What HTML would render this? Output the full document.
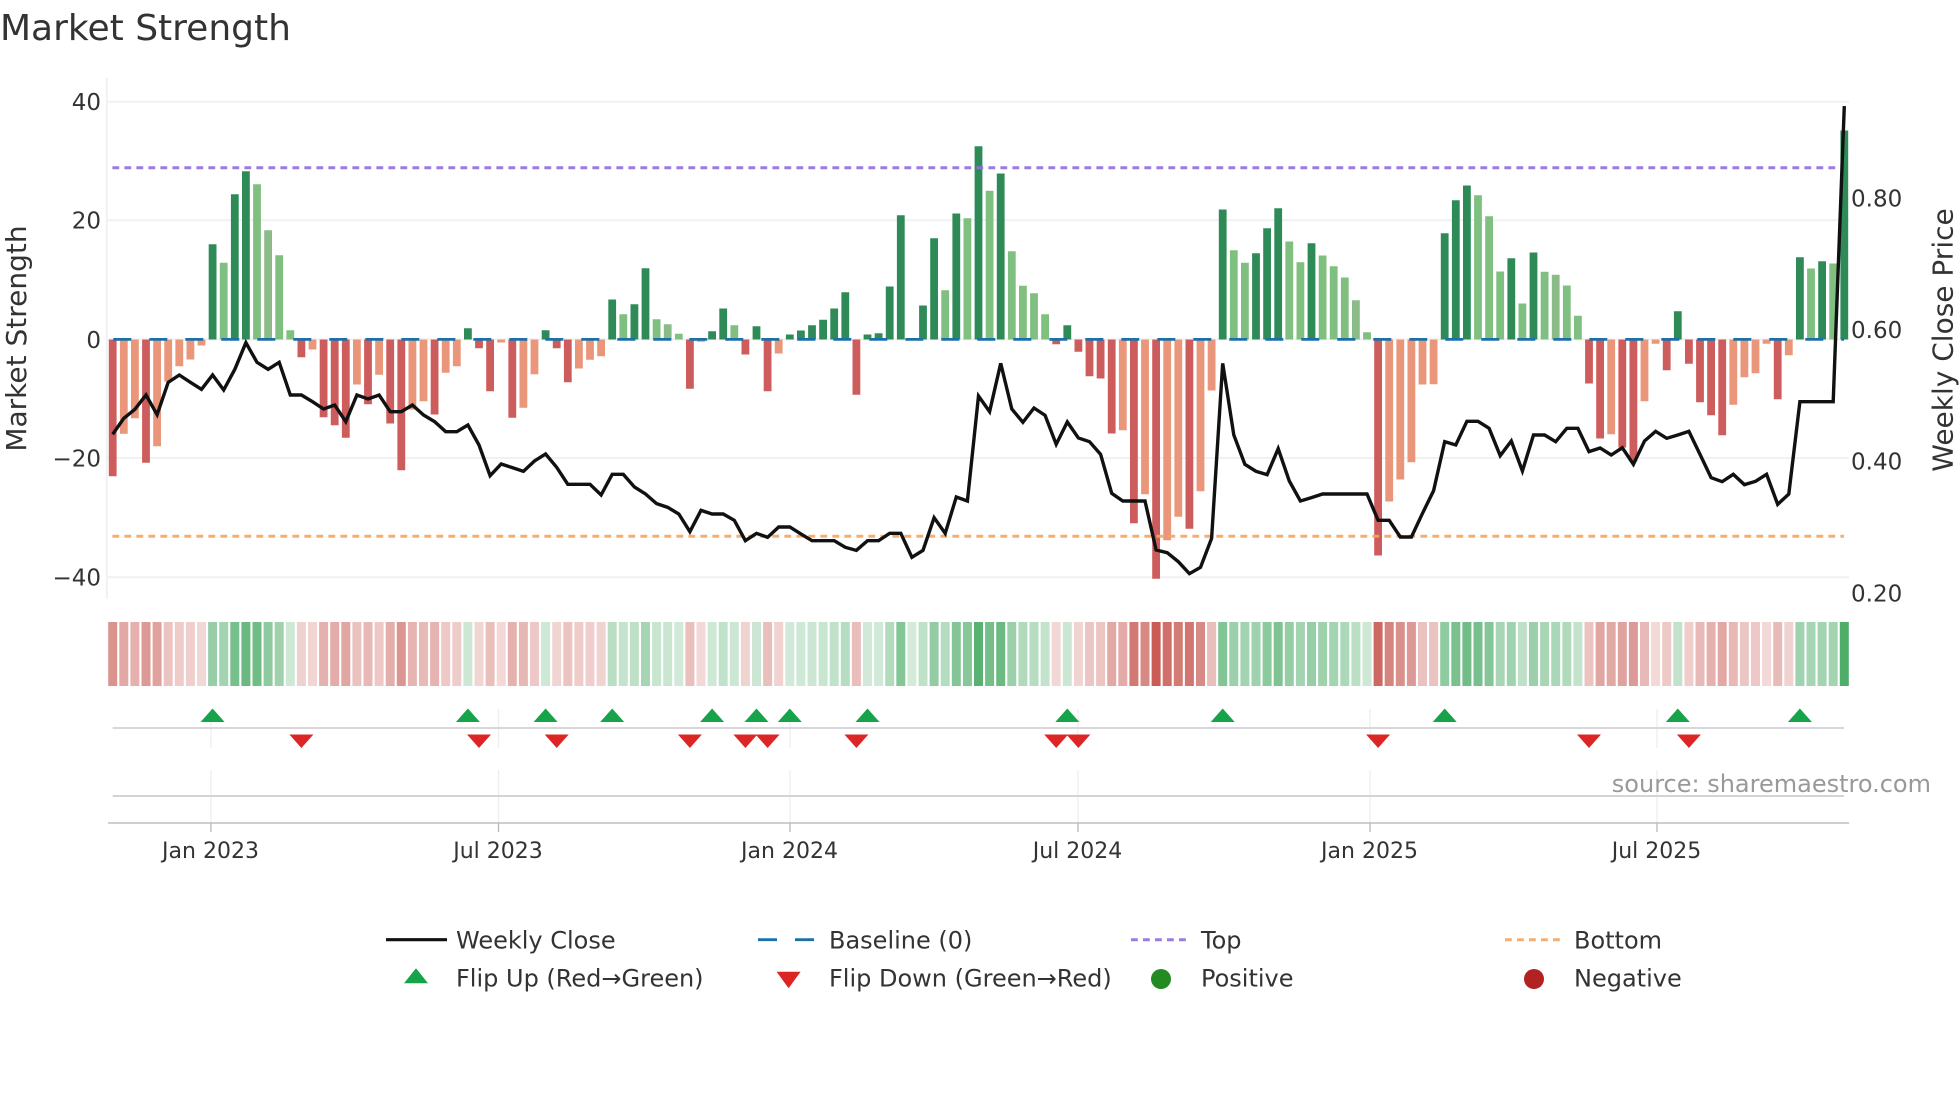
<!DOCTYPE html>
<html lang="en"><head><meta charset="utf-8"><title>Market Strength</title>
<style>
html,body{margin:0;padding:0;background:#fff}
svg{display:block}
text{font-family:"DejaVu Sans","Liberation Sans",sans-serif;fill:#333}
.n{vector-effect:non-scaling-stroke}
.s path{vector-effect:non-scaling-stroke}
</style></head><body>
<svg width="1960" height="1102" viewBox="0 0 1960 1102" xmlns="http://www.w3.org/2000/svg">
<rect width="1960" height="1102" fill="#fff"/>
<text x="0" y="40" font-size="36">Market Strength</text>

<!-- grid -->
<g stroke="#f1f1f3" stroke-width="2" fill="none">
<path d="M106.8 78V599"/>
<path d="M107 101.7H1849M107 220.3H1849M107 339.4H1849M107 458H1849M107 577.3H1849"/>
</g>

<!-- bars -->
<g class="s" transform="translate(112.7,339.5) scale(11.1,1)" fill="none" stroke-width="7.8">
<path stroke="#2e8b57" d="M9 0V-95.3M11 0V-145.3M12 0V-168.3M32 0V-11.3M39 0V-9.3M45 0V-40M47 0V-35.3M48 0V-71.3M54 0V-8.3M55 0V-31M58 0V-13.3M61 0V-5M62 0V-9M63 0V-14.3M64 0V-19.7M65 0V-31M66 0V-47.3M68 0V-5M69 0V-6.3M70 0V-53M71 0V-124.3M73 0V-34M74 0V-101.3M76 0V-126M78 0V-193.3M80 0V-166M86 0V-14.3M100 0V-130M103 0V-86.3M104 0V-111.3M105 0V-131.3M108 0V-96.3M120 0V-106.3M121 0V-139.3M122 0V-154M126 0V-81.3M128 0V-87M141 0V-28.3M152 0V-82.3M154 0V-78.3M156 0V-209"/>
<path stroke="#7fbf7f" d="M10 0V-76.7M13 0V-155.3M15 0V-84.3M16 0V-9.3M46 0V-25.3M49 0V-20.3M51 0V-5.7M56 0V-14.3M75 0V-49.3M77 0V-121.3M79 0V-148.7M81 0V-88.3M82 0V-53.7M83 0V-46.3M84 0V-25.3M101 0V-89.3M102 0V-76.7M106 0V-98M107 0V-77.3M109 0V-84M110 0V-73.3M111 0V-62M113 0V-7.3M123 0V-144.3M124 0V-123.3M125 0V-68M127 0V-36M129 0V-67.7M131 0V-54M132 0V-23.7M153 0V-71M155 0V-76"/>
<path stroke="#8bbb89" d="M14 0V-109.3M50 0V-15.3M112 0V-39.3M130 0V-64.7"/>
<path stroke="#cd5c5c" d="M0 0V136.7M3 0V123.3M17 0V17.7M19 0V77.7M20 0V85.7M21 0V98.3M23 0V64.7M25 0V84M26 0V130.7M29 0V75M33 0V8.7M34 0V51.7M36 0V78.3M40 0V8.7M41 0V42.7M52 0V49.3M57 0V15M59 0V51.7M67 0V55.3M85 0V4.7M87 0V12.3M88 0V36.7M89 0V39M90 0V94M92 0V183.7M94 0V239.3M97 0V189.3M114 0V216M133 0V44M134 0V99M136 0V108M137 0V121.7M140 0V30.7M142 0V24.3M143 0V62.7M144 0V75.7M145 0V95.7M150 0V59.7"/>
<path stroke="#e9967a" d="M1 0V94.3M2 0V78.7M4 0V106.7M5 0V42M6 0V26.7M7 0V20M8 0V6M18 0V10M22 0V45M24 0V35.3M27 0V70M28 0V61.7M30 0V33.3M31 0V26.7M35 0V3M37 0V68.3M38 0V34.7M42 0V29M43 0V20.3M44 0V16.7M53 0V2.3M60 0V14M91 0V90.7M93 0V154.7M95 0V200.7M96 0V177.3M98 0V151.7M99 0V51M115 0V162M116 0V140M117 0V122.7M118 0V45M119 0V44.7M135 0V94.7M138 0V61.7M139 0V4.3M146 0V65.3M147 0V37.7M148 0V33.7M149 0V4.3M151 0V15.7"/>
</g>

<!-- reference lines -->
<g fill="none">
<path d="M113.3 339.4H1844" stroke="#1c70a8" stroke-width="2.8" stroke-dasharray="18 18"/>
<path d="M112.4 167.7H1836" stroke="#9370db" stroke-opacity=".92" stroke-width="3" stroke-dasharray="6.8 5.2"/>
<path d="M112.4 536.3H1844" stroke="#f4a460" stroke-opacity=".9" stroke-width="3" stroke-dasharray="6.8 5.2"/>
</g>

<!-- weekly close -->
<polyline class="n" transform="translate(112.7,330) scale(11.1,0.33333)" fill="none" stroke="#111" stroke-width="3.4" stroke-linejoin="miter" points="0,313 1,265 2,238 3,195 4,254 5,157 6,135 7,157 8,178 9,135 10,180 11,118 12,38 13,97 14,118 15,97 16,195 17,195 18,215 19,237 20,225 21,275 22,195 23,207 24,195 25,245 26,245 27,225 28,255 29,275 30,305 31,305 32,285 33,345 34,437 35,402 36,413 37,424 38,393 39,372 40,412 41,463 42,463 43,463 44,495 45,433 46,433 47,471 48,492 49,521 50,532 51,552 52,605 53,541 54,552 55,552 56,571 57,632 58,610 59,622 60,591 61,591 62,612 63,632 64,632 65,632 66,652 67,661 68,632 69,632 70,610 71,610 72,682 73,661 74,563 75,610 76,501 77,513 78,198 79,245 80,100 81,237 82,277 83,234 84,256 85,343 86,276 87,324 88,335 89,373 90,490 91,513 92,513 93,513 94,660 95,668 96,695 97,731 98,712 99,625 100,100 101,315 102,403 103,424 104,434 105,356 106,453 107,513 108,503 109,492 110,492 111,492 112,492 113,492 114,571 115,571 116,621 117,621 118,550 119,482 120,335 121,345 122,274 123,274 124,295 125,377 126,333 127,423 128,315 129,315 130,335 131,295 132,295 133,365 134,354 135,375 136,353 137,403 138,333 139,304 140,325 141,315 142,304 143,373 144,443 145,455 146,433 147,464 148,454 149,433 150,523 151,492 152,215 153,215 154,215 155,215 156,-672"/>

<!-- heat strip -->
<g class="s" transform="translate(112.7,622) scale(11.1,1)" fill="none" stroke-width="9">
<g stroke="#c95c55">
<path d="M0 0v64" opacity=".66"/><path d="M1 0v64" opacity=".53"/><path d="M2 0v64" opacity=".48"/><path d="M3 0v64" opacity=".62"/><path d="M4 0v64" opacity=".57"/><path d="M5 0v64" opacity=".36"/><path d="M6 0v64" opacity=".31"/><path d="M7 0v64" opacity=".29"/><path d="M8 0v64" opacity=".24"/><path d="M17 0v64" opacity=".28"/><path d="M18 0v64" opacity=".25"/><path d="M19 0v64" opacity=".47"/><path d="M20 0v64" opacity=".5"/><path d="M21 0v64" opacity=".54"/><path d="M22 0v64" opacity=".37"/><path d="M23 0v64" opacity=".43"/><path d="M24 0v64" opacity=".33"/><path d="M25 0v64" opacity=".49"/><path d="M26 0v64" opacity=".64"/><path d="M27 0v64" opacity=".45"/><path d="M28 0v64" opacity=".42"/><path d="M29 0v64" opacity=".46"/><path d="M30 0v64" opacity=".33"/><path d="M31 0v64" opacity=".31"/><path d="M33 0v64" opacity=".25"/><path d="M34 0v64" opacity=".39"/><path d="M35 0v64" opacity=".23"/><path d="M36 0v64" opacity=".47"/><path d="M37 0v64" opacity=".44"/><path d="M38 0v64" opacity=".33"/><path d="M40 0v64" opacity=".25"/><path d="M41 0v64" opacity=".36"/><path d="M42 0v64" opacity=".31"/><path d="M43 0v64" opacity=".29"/><path d="M44 0v64" opacity=".27"/><path d="M52 0v64" opacity=".38"/><path d="M53 0v64" opacity=".23"/><path d="M57 0v64" opacity=".27"/><path d="M59 0v64" opacity=".39"/><path d="M60 0v64" opacity=".27"/><path d="M67 0v64" opacity=".4"/><path d="M85 0v64" opacity=".24"/><path d="M87 0v64" opacity=".26"/><path d="M88 0v64" opacity=".34"/><path d="M89 0v64" opacity=".35"/><path d="M90 0v64" opacity=".53"/><path d="M91 0v64" opacity=".51"/><path d="M92 0v64" opacity=".82"/><path d="M93 0v64" opacity=".72"/><path d="M94 0v64"/><path d="M95 0v64" opacity=".87"/><path d="M96 0v64" opacity=".8"/><path d="M97 0v64" opacity=".84"/><path d="M98 0v64" opacity=".71"/><path d="M99 0v64" opacity=".39"/><path d="M114 0v64" opacity=".92"/><path d="M115 0v64" opacity=".75"/><path d="M116 0v64" opacity=".68"/><path d="M117 0v64" opacity=".62"/><path d="M118 0v64" opacity=".37"/><path d="M119 0v64" opacity=".37"/><path d="M133 0v64" opacity=".36"/><path d="M134 0v64" opacity=".54"/><path d="M135 0v64" opacity=".53"/><path d="M136 0v64" opacity=".57"/><path d="M137 0v64" opacity=".62"/><path d="M138 0v64" opacity=".42"/><path d="M139 0v64" opacity=".23"/><path d="M140 0v64" opacity=".32"/><path d="M142 0v64" opacity=".3"/><path d="M143 0v64" opacity=".42"/><path d="M144 0v64" opacity=".47"/><path d="M145 0v64" opacity=".53"/><path d="M146 0v64" opacity=".43"/><path d="M147 0v64" opacity=".34"/><path d="M148 0v64" opacity=".33"/><path d="M149 0v64" opacity=".23"/><path d="M150 0v64" opacity=".41"/><path d="M151 0v64" opacity=".27"/>
</g>
<g stroke="#4fad6a">
<path d="M9 0v64" opacity=".59"/><path d="M10 0v64" opacity=".52"/><path d="M11 0v64" opacity=".77"/><path d="M12 0v64" opacity=".85"/><path d="M13 0v64" opacity=".81"/><path d="M14 0v64" opacity=".64"/><path d="M15 0v64" opacity=".55"/><path d="M16 0v64" opacity=".27"/><path d="M32 0v64" opacity=".28"/><path d="M39 0v64" opacity=".27"/><path d="M45 0v64" opacity=".39"/><path d="M46 0v64" opacity=".33"/><path d="M47 0v64" opacity=".37"/><path d="M48 0v64" opacity=".5"/><path d="M49 0v64" opacity=".31"/><path d="M50 0v64" opacity=".3"/><path d="M51 0v64" opacity=".26"/><path d="M54 0v64" opacity=".27"/><path d="M55 0v64" opacity=".35"/><path d="M56 0v64" opacity=".29"/><path d="M58 0v64" opacity=".29"/><path d="M61 0v64" opacity=".26"/><path d="M62 0v64" opacity=".27"/><path d="M63 0v64" opacity=".29"/><path d="M64 0v64" opacity=".31"/><path d="M65 0v64" opacity=".35"/><path d="M66 0v64" opacity=".41"/><path d="M68 0v64" opacity=".26"/><path d="M69 0v64" opacity=".26"/><path d="M70 0v64" opacity=".43"/><path d="M71 0v64" opacity=".69"/><path d="M72 0v64" opacity=".24"/><path d="M73 0v64" opacity=".36"/><path d="M74 0v64" opacity=".61"/><path d="M75 0v64" opacity=".42"/><path d="M76 0v64" opacity=".7"/><path d="M77 0v64" opacity=".68"/><path d="M78 0v64" opacity=".94"/><path d="M79 0v64" opacity=".78"/><path d="M80 0v64" opacity=".84"/><path d="M81 0v64" opacity=".56"/><path d="M82 0v64" opacity=".44"/><path d="M83 0v64" opacity=".41"/><path d="M84 0v64" opacity=".33"/><path d="M86 0v64" opacity=".29"/><path d="M100 0v64" opacity=".71"/><path d="M101 0v64" opacity=".56"/><path d="M102 0v64" opacity=".52"/><path d="M103 0v64" opacity=".55"/><path d="M104 0v64" opacity=".65"/><path d="M105 0v64" opacity=".72"/><path d="M106 0v64" opacity=".6"/><path d="M107 0v64" opacity=".52"/><path d="M108 0v64" opacity=".59"/><path d="M109 0v64" opacity=".55"/><path d="M110 0v64" opacity=".51"/><path d="M111 0v64" opacity=".47"/><path d="M112 0v64" opacity=".38"/><path d="M113 0v64" opacity=".27"/><path d="M120 0v64" opacity=".63"/><path d="M121 0v64" opacity=".75"/><path d="M122 0v64" opacity=".8"/><path d="M123 0v64" opacity=".77"/><path d="M124 0v64" opacity=".69"/><path d="M125 0v64" opacity=".49"/><path d="M126 0v64" opacity=".54"/><path d="M127 0v64" opacity=".37"/><path d="M128 0v64" opacity=".56"/><path d="M129 0v64" opacity=".49"/><path d="M130 0v64" opacity=".48"/><path d="M131 0v64" opacity=".44"/><path d="M132 0v64" opacity=".33"/><path d="M141 0v64" opacity=".34"/><path d="M152 0v64" opacity=".54"/><path d="M153 0v64" opacity=".5"/><path d="M154 0v64" opacity=".52"/><path d="M155 0v64" opacity=".52"/><path d="M156 0v64"/>
</g>
</g>

<!-- lower panel -->
<g fill="none">
<path stroke="#eceef2" stroke-width="1.3" d="M210.9 709V748M210.9 770V823M498.5 709V748M498.5 770V823M790 709V748M790 770V823M1078 709V748M1078 770V823M1370 709V748M1370 770V823M1657 709V748M1657 770V823"/>
<path stroke="#d6d6db" stroke-width="2" d="M112.7 728H1844"/>
<path stroke="#d4d4d4" stroke-width="2" d="M112.7 796H1844"/>
<path stroke="#cfcfcf" stroke-width="2" d="M108 823H1849"/>
<path stroke="#b8b8b8" stroke-width="1.3" d="M210.9 823V832M498.5 823V832M790 823V832M1078 823V832M1370 823V832M1657 823V832"/>
</g>
<path fill="#16a34a" d="M212.6 708.5l12 13.5h-24zM467.9 708.5l12 13.5h-24zM545.6 708.5l12 13.5h-24zM612.2 708.5l12 13.5h-24zM712.1 708.5l12 13.5h-24zM756.5 708.5l12 13.5h-24zM789.8 708.5l12 13.5h-24zM867.5 708.5l12 13.5h-24zM1067.3 708.5l12 13.5h-24zM1222.7 708.5l12 13.5h-24zM1444.7 708.5l12 13.5h-24zM1677.8 708.5l12 13.5h-24zM1799.9 708.5l12 13.5h-24z"/>
<path fill="#dc2626" d="M301.4 748l12-13.5h-24zM479 748l12-13.5h-24zM556.7 748l12-13.5h-24zM689.9 748l12-13.5h-24zM745.4 748l12-13.5h-24zM767.6 748l12-13.5h-24zM856.4 748l12-13.5h-24zM1056.2 748l12-13.5h-24zM1078.4 748l12-13.5h-24zM1378.1 748l12-13.5h-24zM1589 748l12-13.5h-24zM1688.9 748l12-13.5h-24z"/>

<!-- axis labels -->
<g font-size="23" text-anchor="end">
<text x="101" y="110">40</text>
<text x="101" y="228.7">20</text>
<text x="101" y="348">0</text>
<text x="101" y="466.5">−20</text>
<text x="101" y="585.7">−40</text>
</g>
<g font-size="23">
<text x="1851" y="206.7">0.80</text>
<text x="1851" y="337.8">0.60</text>
<text x="1851" y="469.3">0.40</text>
<text x="1851" y="601.5">0.20</text>
</g>
<text transform="translate(26.2,338.5) rotate(-90)" text-anchor="middle" font-size="28">Market Strength</text>
<text transform="translate(1952.5,340) rotate(-90)" text-anchor="middle" font-size="28">Weekly Close Price</text>
<g font-size="22" text-anchor="middle">
<text x="210.5" y="858">Jan 2023</text>
<text x="498" y="858">Jul 2023</text>
<text x="789.5" y="858">Jan 2024</text>
<text x="1077.5" y="858">Jul 2024</text>
<text x="1369.5" y="858">Jan 2025</text>
<text x="1656.5" y="858">Jul 2025</text>
</g>
<text x="1931" y="792" text-anchor="end" font-size="24" style="fill:#999">source: sharemaestro.com</text>

<!-- legend -->
<g fill="none">
<path d="M386 939.7H447" stroke="#111" stroke-width="3.2"/>
<path d="M758 939.7H777M795 939.7H814" stroke="#1c70a8" stroke-width="2.8"/>
<path d="M1131 939.7H1187" stroke="#9370db" stroke-opacity=".92" stroke-width="3" stroke-dasharray="6.8 5.2"/>
<path d="M1505 939.7H1560" stroke="#f4a460" stroke-opacity=".9" stroke-width="3" stroke-dasharray="6.8 5.2"/>
</g>
<path fill="#16a34a" d="M416 968.3l12 15h-24z"/>
<path fill="#dc2626" d="M788.6 988.3l12-16.5h-24z"/>
<circle cx="1161" cy="979" r="10" fill="#228b22"/>
<circle cx="1534" cy="979" r="10" fill="#b22222"/>
<g font-size="24">
<text x="456" y="948.6">Weekly Close</text>
<text x="829" y="948.6">Baseline (0)</text>
<text x="1201" y="948.6">Top</text>
<text x="1574" y="948.6">Bottom</text>
<text x="456" y="986.4">Flip Up (Red→Green)</text>
<text x="829" y="986.4">Flip Down (Green→Red)</text>
<text x="1201" y="986.4">Positive</text>
<text x="1574" y="986.4">Negative</text>
</g>
</svg>
</body></html>
